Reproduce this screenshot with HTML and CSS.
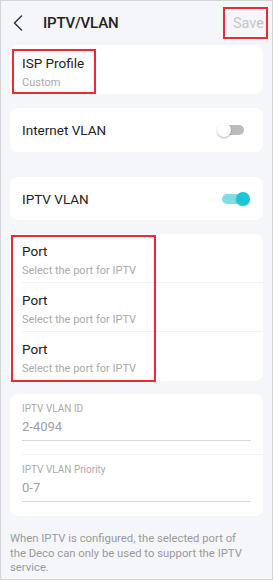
FILE: index.html
```html
<!DOCTYPE html>
<html>
<head>
<meta charset="utf-8">
<link rel="stylesheet" href="styles.css">
</head>
<body>
<div class="screen">
  <header class="topbar">
    <svg class="back" width="10" height="16" viewBox="0 0 10 16"><path d="M8.5 1 L1.5 8 L8.5 15" fill="none" stroke="#333" stroke-width="1.5" stroke-linecap="round" stroke-linejoin="round"/></svg>
    <span class="title">IPTV/VLAN</span>
    <span class="save">Save<span class="mark mark-save"></span></span>
  </header>

  <section class="card card-isp">
    <div class="row-two">
      <div class="label">ISP Profile</div>
      <div class="sub">Custom</div>
    </div>
    <span class="mark mark-isp"></span>
  </section>

  <section class="card card-toggle card-internet">
    <span class="label">Internet VLAN</span>
    <span class="switch off"><span class="knob"></span></span>
  </section>

  <section class="card card-toggle card-iptv">
    <span class="label">IPTV VLAN</span>
    <span class="switch on"><span class="knob"></span></span>
  </section>

  <section class="card card-ports">
    <div class="port">
      <div class="label">Port</div>
      <div class="sub">Select the port for IPTV</div>
    </div>
    <div class="port">
      <div class="label">Port</div>
      <div class="sub">Select the port for IPTV</div>
    </div>
    <div class="port">
      <div class="label">Port</div>
      <div class="sub">Select the port for IPTV</div>
    </div>
    <span class="mark mark-ports"></span>
  </section>

  <section class="card card-fields">
    <div class="field">
      <div class="field-label">IPTV VLAN ID</div>
      <div class="field-value">2-4094</div>
    </div>
    <div class="field">
      <div class="field-label">IPTV VLAN Priority</div>
      <div class="field-value">0-7</div>
    </div>
  </section>

  <p class="note">When IPTV is configured, the selected port of the Deco can only be used to support the IPTV service.</p>
</div>
</body>
</html>
```
FILE: styles.css
```css
* { box-sizing: border-box; }
html, body { margin: 0; padding: 0; }
body {
  width: 273px;
  height: 580px;
  font-family: Roboto, "Open Sans", sans-serif;
  color: #222;
}
.screen {
  width: 273px;
  height: 580px;
  background: #f5f6fa;
  border: 1px solid #d4d4d4;
  overflow: hidden;
}
.topbar {
  height: 44px;
  display: flex;
  align-items: center;
  padding: 0 7px 0 12px;
}
.back { display: block; margin-top: -1px; }
.title {
  margin-left: 20px;
  font-size: 15px;
  font-weight: 500;
  color: #222;
  letter-spacing: -0.2px;
}
.save {
  position: relative;
  margin-left: auto;
  font-size: 14.5px;
  color: #c6c6c6;
  padding: 0 1px;
}
.card {
  position: relative;
  background: #fff;
  border-radius: 8px;
  margin: 0 9px 0 9px;
}
.label { font-size: 13.5px; color: #222; line-height: 18px; }
.sub { font-size: 11px; color: #aaa; line-height: 14px; margin-top: 4px; }

.card-isp { height: 49px; padding: 9px 12px; }

.card-toggle {
  display: flex;
  align-items: center;
  justify-content: space-between;
  padding: 0 17px 0 12px;
}
.card-internet { margin-top: 14px; height: 44px; }
.card-iptv { margin-top: 25px; height: 43px; }

.switch {
  position: relative;
  width: 26px;
  height: 10px;
  border-radius: 5px;
}
.switch.off { background: #bcbcbc; margin-right: 2px; }
.switch.on { background: #7fdde6; width: 24px; }
.knob {
  position: absolute;
  top: -2px;
  width: 14px;
  height: 14px;
  border-radius: 50%;
}
.switch.off .knob { left: -1px; background: #fff; box-shadow: 0 1px 2px rgba(0,0,0,0.3); }
.switch.on .knob { right: -4px; background: #1cc6d6; box-shadow: 0 1px 2px rgba(0,0,0,0.15); }

.card-ports { margin-top: 14px; padding-left: 12px; }
.port {
  height: 49px;
  padding-top: 8px;
  border-bottom: 1px solid #f1f2f4;
}
.port:last-of-type { border-bottom: none; }

.card-fields { margin-top: 13px; height: 122px; padding-left: 12px; }
.field {
  height: 61px;
  padding-top: 9px;
  border-bottom: 1px solid #f3f4f6;
}
.field:last-child { border-bottom: none; }
.field-label { font-size: 10px; color: #aaa; line-height: 12px; }
.field-value {
  margin-right: 12px;
  font-size: 13px;
  color: #a0a0a0;
  line-height: 18px;
  margin-top: 3px;
  padding-bottom: 4px;
  border-bottom: 1px solid #d8d8d8;
}

.note {
  margin: 16px 24px 0 9px;
  font-size: 11.3px;
  line-height: 14.5px;
  color: #9a9a9a;
}

.mark {
  position: absolute;
  border: 2px solid #ec2a35;
  pointer-events: none;
}
.mark-save { left: -9px; right: -3px; top: -8px; bottom: -7px; }
.mark-isp { left: 2px; top: 4px; width: 84px; height: 45px; }
.mark-ports { left: 1px; top: 1px; width: 145px; height: 147px; }
```
